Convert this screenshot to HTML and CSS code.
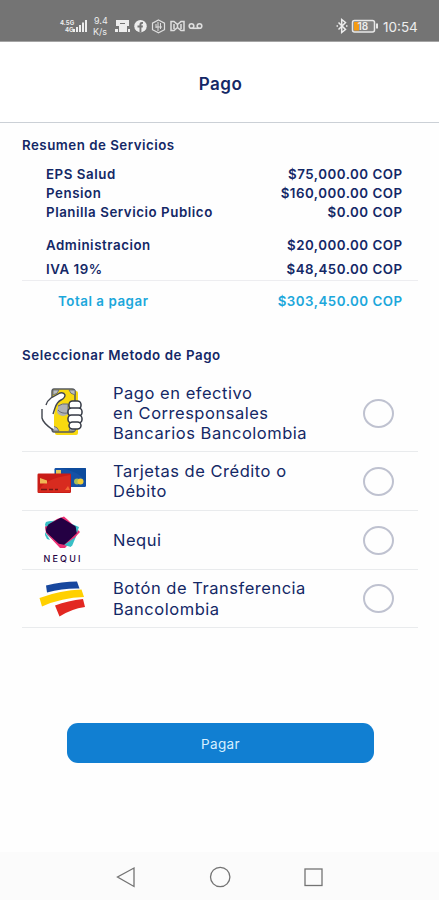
FILE: index.html
```html
<!DOCTYPE html>
<html lang="es">
<head>
<meta charset="utf-8">
<title>Pago</title>
<link rel="stylesheet" href="styles.css">
</head>
<body>
<div class="screen">
  <div class="status">
    <svg class="status-left" width="150" height="22" viewBox="58 15 150 22">
      <g fill="#ededed">
        <text x="60" y="25" class="tiny">4.5G</text>
        <text x="65" y="32" class="tiny">4G</text>
        <path d="M73 29h2v3h-2zM76 27h2v5h-2zM79 25h2v7h-2zM82 22.500h2v9.500h-2zM85 20h2v12h-2z"/>
        <text x="94" y="24" class="rate">9.4</text>
        <text x="93" y="35" class="rate">K/s</text>
        <path d="M116 20h13v6h-2v6h-8v-6h-3zM115 29h3v3h-3zM128 29h2v3h-2z"/>
        <path d="M120 23.500h5" stroke="#747474"/>
        <circle cx="140.500" cy="26.200" r="6.200"/>
        <path fill="#747474" d="M139.500 32.500v-5h-2v-2h2v-1.500q0-2.500 3.500-2v1.800q-1.600 0-1.600.8v.9h1.600l-.3 2h-1.300v5z"/>
      </g>
      <g fill="none" stroke="#dedede" stroke-width="1.200">
        <path d="M158.500 20l6 3.200v6.500l-6 3.200-6-3.200v-6.500z"/>
        <path d="M158 22v9M160.500 23v6M156 27h6M156 24v4" stroke-width="1"/>
        <path d="M171 21.500h3l3.500 3 3.500-3h3v9h-3l-3.500-3-3.500 3h-3zM174 24v5M181 24v5M177.500 24.500v3" stroke-width="1.500"/>
        <circle cx="191.500" cy="26" r="2.300" stroke-width="1.600"/><circle cx="199.500" cy="26" r="2.300" stroke-width="1.600"/><path d="M191.500 28.300h8" stroke-width="1.600"/>
      </g>
    </svg>
    <div class="status-right">
      <svg width="44" height="18" viewBox="335 17 44 18">
        <path d="M338.500 22.500l7 7-3.800 3v-13l3.800 3-7 7M336.500 26h1.500M346 26h1.500" fill="none" stroke="#ededed" stroke-width="1.500"/>
        <rect x="352.500" y="20.500" width="22" height="11.500" rx="2" fill="#828282" stroke="#e8e8e8" stroke-width="1.500"/>
        <path fill="#f49b13" d="M354 22h5v8.500h-5z"/><path fill="#e8e8e8" d="M376 23.500h2v5h-2z"/>
        <text x="357.500" y="30" class="battery">18</text>
      </svg>
      <span class="clock">10:54</span>
    </div>
  </div>

  <header class="header"><h1>Pago</h1></header>

  <main class="content">
    <h2 class="summary-title">Resumen de Servicios</h2>
    <dl class="summary">
      <div class="line"><dt>EPS Salud</dt><dd>$75,000.00 COP</dd></div>
      <div class="line"><dt>Pension</dt><dd>$160,000.00 COP</dd></div>
      <div class="line"><dt>Planilla Servicio Publico</dt><dd>$0.00 COP</dd></div>
      <div class="line admin"><dt>Administracion</dt><dd>$20,000.00 COP</dd></div>
      <div class="line tax"><dt>IVA 19%</dt><dd>$48,450.00 COP</dd></div>
      <div class="line total"><dt>Total a pagar</dt><dd>$303,450.00 COP</dd></div>
    </dl>

    <h2 class="method-title">Seleccionar Metodo de Pago</h2>
    <div class="options">
      <div class="option cash">
        <svg width="80" height="60" viewBox="22 383 80 60">
          <rect x="55" y="391" width="23" height="44" rx="2" fill="#f8d90f"/>
          <path d="M54 389h18q3 0 3 3v37q0 3-3 3H54q-2 0-2-3v-37q0-3 2-3z" fill="#f8d90f" stroke="#555960" stroke-width="1.500"/>
          <path d="M53 390h6q-1 4-6 5zM69 390h6v5q-5-1-6-5zM53 426q5 1 6 5h-6zM75 426v5h-6q1-5 6-5z" fill="#b9bcc0" stroke="#62656c" stroke-width=".8"/>
          <ellipse cx="63" cy="411" rx="6" ry="5" fill="#aeb0b4"/>
          <path d="M42 419V411q1-7 9-13l9-5q4-1 5 2 0 3-4 5-4 3-6 8l-1 8v13Q43 425 42 419z" fill="#fff"/>
          <path d="M46 405q1-4 5-7l9-5q4-1 5 2 0 3-4 5-4 2-6 8l-2 6M42 409v9q1 5 11 12" fill="none" stroke="#42464f" stroke-width="1.400"/>
          <path d="M58 406q4-3 10-2v9q-7 1-10-3" fill="#afb1b5" stroke="#696c72"/>
          <g fill="#fff" stroke="#343944" stroke-width="1.500"><rect x="69" y="401" width="12" height="8" rx="3.500"/><rect x="68" y="408" width="14" height="8" rx="3.500"/><rect x="68" y="415" width="14" height="8" rx="3.500"/><rect x="69" y="422" width="12" height="7" rx="3.500"/></g>
        </svg>
        <span class="label">Pago en efectivo<br>en Corresponsales<br>Bancarios Bancolombia</span>
        <span class="radio"></span>
      </div>
      <div class="option cards">
        <svg width="80" height="40" viewBox="22 461 80 40">
          <rect x="54.500" y="468" width="31.500" height="19" rx="1.200" fill="#1551a5"/>
          <path d="M60 468q18 3 26 13v-12q0-1-1-1z" fill="#0d4b9c"/>
          <path fill="#e2c657" d="M56 470h5v4h-5z"/><circle cx="77" cy="481.500" r="3" fill="#a9bc58"/><circle cx="80.500" cy="481.500" r="3" fill="#f2ce35"/>
          <rect x="37.500" y="473.500" width="33.500" height="19.500" rx="1.200" fill="#c91c17"/>
          <path d="M38 492q5-13 32-17v17z" fill="#e03423" opacity=".65"/>
          <path fill="#efb655" d="M40 478l7 2.500v3H40z"/>
          <path d="M41 489.500h6M49 489.500h4M55 489.500h3" stroke="#721914" stroke-width="1.700"/>
          <path d="M65 490l3-4 2 4z" fill="#f26a34"/>
        </svg>
        <span class="label">Tarjetas de Crédito o<br>Débito</span>
        <span class="radio"></span>
      </div>
      <div class="option">
        <svg width="80" height="52" viewBox="22 514 80 52">
          <path d="M46 522l12-2 19 7 1 5-6 14-13-1-12-10-2-7z" fill="#38bfc6"/>
          <path d="M57 519l7-2.500 4 3.500 12 12-15 16-5 0-14-15-1-6z" fill="#ed2f73"/>
          <path d="M45 525l1-3 6-1-4 6zM72 524l7 3-2 6zM45 532l5 8-3-1-2-4zM74 538l-3 9-7-2z" fill="#38bfc6"/>
          <path d="M61 518.500l14 8.500 1 6-12 11-5-1-12-11q-1-3 2-7z" fill="#240043" stroke="#240043" stroke-width="1.500" stroke-linejoin="round"/>
          <text x="43.500" y="562" class="nequi" textLength="37" lengthAdjust="spacing">NEQUI</text>
        </svg>
        <span class="label">Nequi</span>
        <span class="radio"></span>
      </div>
      <div class="option last">
        <svg width="80" height="44" viewBox="22 576 80 44">
          <path d="M46 584.500q16-4 31-4l2.500 7q-16-.5-32.500 4z" fill="#17479e"/>
          <path d="M39.500 597q21-8 42-8.500l2.500 7.500q-22 .5-42 9.500z" fill="#ffd000"/>
          <path d="M55 604.500q13-5 28-6.500l2 8q-14 2-25.500 9.500z" fill="#e22822"/>
        </svg>
        <span class="label">Botón de Transferencia<br>Bancolombia</span>
        <span class="radio"></span>
      </div>
    </div>
    <button class="pay">Pagar</button>
  </main>

  <nav class="nav">
    <svg width="439" height="48" viewBox="0 852 439 48" fill="none" stroke="#737373" stroke-width="1.300">
      <path d="M134 868v18.500L117.500 877z"/><circle cx="220.200" cy="877" r="9.700"/><rect x="305" y="869" width="17" height="16.500"/>
    </svg>
  </nav>
</div>
</body>
</html>
```
FILE: styles.css
```css
* { box-sizing: border-box; }
body { margin: 0; background: #fefefe; color: #142866; font-family: Inter, "Liberation Sans", sans-serif; }
h1, h2, dl, dt, dd { margin: 0; }
svg { display: block; flex: none; }
.screen { width: 439px; height: 900px; display: flex; flex-direction: column; overflow: hidden; }
.status { height: 42px; flex: none; background: #747474; border-bottom: 1px solid #a4a4a4; display: flex; justify-content: space-between; padding: 15px 19px 0 58px; }
.status-right { display: flex; gap: 4px; padding-top: 2px; }
.clock { color: #eee; font-size: 13.500px; line-height: 20px; width: 37px; white-space: nowrap; }
.tiny { font-size: 6px; font-weight: 700; }
.rate { font-size: 9px; }
.battery { font-size: 10px; font-weight: 600; fill: #eee; }
.header { height: 81px; flex: none; background: #fff; border-bottom: 1px solid #cbd0d6; display: flex; justify-content: center; align-items: center; padding: 4px 0 0 2px; }
.header h1 { font-size: 17px; font-weight: 600; letter-spacing: .5px; }
.content { flex: 1; display: flex; flex-direction: column; padding: 12px 21px 0 22px; }
h2 { font-size: 13.300px; font-weight: 600; line-height: 20px; }
.summary-title { letter-spacing: .5px; }
.summary { padding-top: 10px; }
.line { display: flex; justify-content: space-between; padding: 0 16px 0 24px; height: 19px; line-height: 19px; font-size: 13.300px; font-weight: 600; letter-spacing: .55px; white-space: nowrap; }
.line dd { letter-spacing: .5px; margin-right: -.5px; }
.admin { margin-top: 14px; }
.tax { height: 25px; padding-top: 5px; }
.total { height: 40px; padding: 11px 16px 0 36px; border-top: 1px solid #ededf0; color: #1ca7db; }
.method-title { margin-top: 25px; letter-spacing: .57px; }
.options { padding-top: 10px; }
.option { height: 59px; border-bottom: 1px solid #e9ebed; display: flex; align-items: center; padding-right: 24px; }
.cash { height: 77px; }
.last { height: 58px; }
.label { margin-left: 11px; flex: 1; font-size: 16.500px; line-height: 20.300px; letter-spacing: .52px; white-space: nowrap; }
.radio { width: 31px; height: 29px; border: 2px solid #bfc2d0; border-radius: 50%; }
.nequi { font-size: 9px; font-weight: 500; fill: #240043; }
.pay { width: 307px; height: 40px; margin: 95px 0 0 45px; padding: 1px 0 0; border: 0; border-radius: 11px; background: #117fd2; color: #d7efff; font: 400 13.500px Inter, sans-serif; letter-spacing: .4px; }
.nav { height: 48px; flex: none; background: #fbfbfb; }
```
